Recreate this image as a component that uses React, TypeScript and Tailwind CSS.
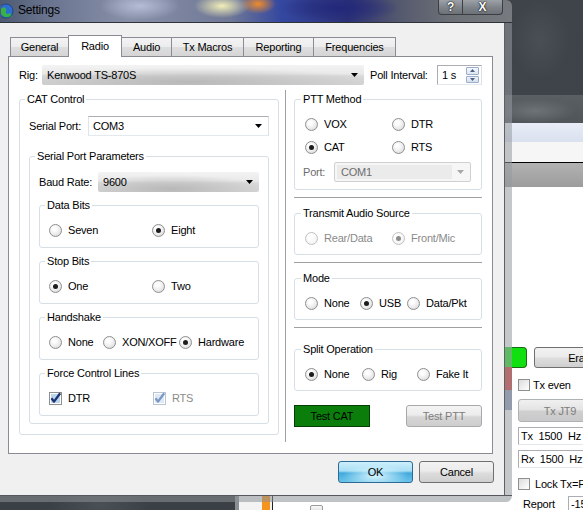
import React from "react";

type RP = { label: string; checked?: boolean; disabled?: boolean; w?: string };

function Radio({ label, checked, disabled, w = "" }: RP) {
  return (
    <div className={`flex items-center h-[14px] shrink-0 ${w}`}>
      <span
        className={`w-[13px] h-[13px] rounded-full border flex items-center justify-center shrink-0 ${
          disabled
            ? "border-[#c2c2c2] bg-[radial-gradient(circle_at_40%_35%,#ffffff_20%,#ededed_100%)]"
            : "border-[#8f8f8f] bg-[radial-gradient(circle_at_40%_35%,#ffffff_15%,#ececec_55%,#d0d0d0_100%)]"
        }`}
      >
        {checked ? (
          <span className={`w-[5px] h-[5px] rounded-full ${disabled ? "bg-[#8c8c8c]" : "bg-[#1c1c1c]"}`} />
        ) : null}
      </span>
      <span className={`ml-[6px] whitespace-nowrap ${disabled ? "text-[#8a8a8a]" : ""}`}>{label}</span>
    </div>
  );
}

function Check({ label, checked, disabled, w = "" }: RP) {
  return (
    <div className={`flex items-center h-[14px] shrink-0 ${w}`}>
      <svg width="13" height="13" viewBox="0 0 13 13" className="shrink-0 overflow-visible">
        <rect x="0.5" y="0.5" width="12" height="12" fill="#ffffff" stroke={disabled ? "#b7c5d4" : "#8e8f8f"} />
        <rect x="2" y="2" width="9" height="9" fill={checked ? (disabled ? "#dde9f4" : "#bcd6ee") : "#e9e9e9"} />
        {checked ? (
          <path
            d="M2.5 6.2 L5 9.6 L11.2 1.2"
            fill="none"
            stroke={disabled ? "#7b97c4" : "#1d3472"}
            strokeWidth="2.3"
            strokeLinejoin="round"
          />
        ) : null}
      </svg>
      <span className={`ml-[6px] whitespace-nowrap ${disabled ? "text-[#8a8a8a]" : ""}`}>{label}</span>
    </div>
  );
}

function Group({ title, className = "", children }: { title: string; className?: string; children?: React.ReactNode }) {
  return (
    <fieldset className={`border border-[#d5dfe5] rounded-[3px] ${className}`}>
      <legend className="ml-[-4px] px-[2px] leading-[14px]">{title}</legend>
      {children}
    </fieldset>
  );
}

function Arrow({ color = "#000" }: { color?: string }) {
  return (
    <svg width="7" height="4" viewBox="0 0 7 4" className="shrink-0">
      <path d="M0 0 H7 L3.5 4 Z" fill={color} />
    </svg>
  );
}

function GlossCombo({ text, w }: { text: string; w: string }) {
  return (
    <div
      className={`${w} h-[20px] shrink-0 flex items-center pl-[5px] pr-[6px] rounded-[2px] bg-[radial-gradient(ellipse_60%_70%_at_45%_85%,#b8b8b8_0%,rgba(200,200,200,0)_100%),linear-gradient(180deg,#f3f3f3_0%,#e9e9e9_45%,#dadada_55%,#d4d4d4_100%)]`}
    >
      <span className="flex-1">{text}</span>
      <Arrow />
    </div>
  );
}

function Pane() {
  return (
    <div className="w-[485px] h-[398px] bg-white border border-[#898c95] px-[10px] pt-[8px] relative z-0">
      {/* Rig row */}
      <div className="flex items-center h-[20px]">
        <span className="w-[23px] shrink-0">Rig:</span>
        <GlossCombo text="Kenwood TS-870S" w="w-[322px]" />
        <span className="ml-[6px] whitespace-nowrap">Poll Interval:</span>
        <div className="ml-auto w-[45px] h-[20px] border border-[#abadb3] border-r-[#dbdfe6] border-b-[#e3e9ef] flex items-center pl-[4px] pr-[2px]">
          <span className="flex-1">1 s</span>
          <div className="w-[13px] h-[16px] flex flex-col gap-[1px]">
            <div className="flex-1 border border-[#9aaecb] rounded-[1px] bg-[linear-gradient(#f5f8fc,#dce6f2)] flex items-center justify-center">
              <svg width="5" height="3" viewBox="0 0 5 3"><path d="M0 3 L2.5 0 L5 3 Z" fill="#4c5f86" /></svg>
            </div>
            <div className="flex-1 border border-[#9aaecb] rounded-[1px] bg-[linear-gradient(#eef3f9,#d4e0ee)] flex items-center justify-center">
              <svg width="5" height="3" viewBox="0 0 5 3"><path d="M0 0 L2.5 3 L5 0 Z" fill="#4c5f86" /></svg>
            </div>
          </div>
        </div>
      </div>

      {/* Columns */}
      <div className="mt-[5px] flex h-[352px]">
        {/* Left column */}
        <div className="w-[260px] shrink-0 pt-[2px]">
          <Group title="CAT Control" className="px-[9px] pt-[10px] pb-[10px]">
            <div className="flex items-center h-[20px]">
              <span className="w-[59px] shrink-0">Serial Port:</span>
              <div className="w-[181px] h-[20px] border border-[#abadb3] border-r-[#dbdfe6] border-b-[#e3e9ef] border-l-[#e2e3ea] flex items-center pl-[4px] pr-[6px] bg-white">
                <span className="flex-1">COM3</span>
                <Arrow />
              </div>
            </div>
            <Group title="Serial Port Parameters" className="mt-[13px] px-[9px] pt-[9px] pb-[7px]">
              <div className="flex items-center h-[20px]">
                <span className="w-[59px] shrink-0">Baud Rate:</span>
                <GlossCombo text="9600" w="w-[161px]" />
              </div>
              <Group title="Data Bits" className="mt-[6px] px-[9px] pt-[11px] pb-[10px]">
                <div className="flex">
                  <Radio label="Seven" w="w-[103px]" />
                  <Radio label="Eight" checked />
                </div>
              </Group>
              <Group title="Stop Bits" className="mt-[6px] px-[9px] pt-[11px] pb-[10px]">
                <div className="flex">
                  <Radio label="One" checked w="w-[103px]" />
                  <Radio label="Two" />
                </div>
              </Group>
              <Group title="Handshake" className="mt-[6px] px-[9px] pt-[11px] pb-[10px]">
                <div className="flex">
                  <Radio label="None" w="w-[54px]" />
                  <Radio label="XON/XOFF" w="w-[76px]" />
                  <Radio label="Hardware" checked />
                </div>
              </Group>
              <Group title="Force Control Lines" className="mt-[6px] px-[9px] pt-[11px] pb-[10px]">
                <div className="flex">
                  <Check label="DTR" checked w="w-[104px]" />
                  <Check label="RTS" checked disabled />
                </div>
              </Group>
            </Group>
          </Group>
        </div>

        {/* Vertical separator */}
        <div className="ml-[6px] w-px bg-[#a0a0a0] shrink-0" />

        {/* Right column */}
        <div className="ml-[8px] flex-1 pt-[2px] flex flex-col">
          <Group title="PTT Method" className="px-[10px] pt-[11px] pb-[7px]">
            <div className="flex">
              <Radio label="VOX" w="w-[87px]" />
              <Radio label="DTR" />
            </div>
            <div className="flex mt-[9px]">
              <Radio label="CAT" checked w="w-[87px]" />
              <Radio label="RTS" />
            </div>
            <div className="flex items-center h-[20px] mt-[8px] ml-[-2px]">
              <span className="w-[31px] shrink-0 text-[#6d6d6d]">Port:</span>
              <div className="w-[137px] h-[20px] border border-[#d0d0d0] rounded-[2px] bg-[#f6f6f6] flex items-stretch p-[2px]">
                <div className="flex-1 bg-[#ebebeb] flex items-center pl-[4px] text-[#6d6d6d]">COM1</div>
                <div className="w-[16px] flex items-center justify-center">
                  <Arrow color="#a8a8a8" />
                </div>
              </div>
            </div>
          </Group>
          <div className="mt-[7px] h-px bg-[#a0a0a0]" />
          <Group title="Transmit Audio Source" className="mt-[8px] px-[10px] pt-[11px] pb-[9px]">
            <div className="flex">
              <Radio label="Rear/Data" disabled w="w-[87px]" />
              <Radio label="Front/Mic" checked disabled />
            </div>
          </Group>
          <div className="mt-[7px] h-px bg-[#a0a0a0]" />
          <Group title="Mode" className="mt-[8px] px-[10px] pt-[11px] pb-[9px]">
            <div className="flex">
              <Radio label="None" w="w-[55px]" />
              <Radio label="USB" checked w="w-[47px]" />
              <Radio label="Data/Pkt" />
            </div>
          </Group>
          <div className="mt-[7px] h-px bg-[#a0a0a0]" />
          <Group title="Split Operation" className="mt-[14px] px-[10px] pt-[11px] pb-[9px]">
            <div className="flex">
              <Radio label="None" checked w="w-[57px]" />
              <Radio label="Rig" w="w-[55px]" />
              <Radio label="Fake It" />
            </div>
          </Group>
          <div className="mt-[14px] flex justify-between">
            <div className="w-[76px] h-[22px] bg-[#0b7d0b] border border-[#063f06] flex items-center justify-center">
              Test CAT
            </div>
            <div className="w-[76px] h-[22px] rounded-[3px] border border-[#a9a9a9] bg-[linear-gradient(180deg,#f4f4f4_0%,#ececec_45%,#d6d6d6_55%,#cdcdcd_100%)] flex items-center justify-center text-[#7d7d7d]">
              Test PTT
            </div>
          </div>
        </div>
      </div>
    </div>
  );
}

function Tabs() {
  const tab =
    "h-[19px] border-t border-r border-[#898c95] bg-[linear-gradient(180deg,#f3f3f3_0%,#ececec_50%,#dedede_50%,#d5d5d5_100%)] flex items-center justify-center whitespace-nowrap";
  return (
    <div className="ml-[2px] h-[21px] flex items-end relative z-10">
      <div className={`${tab} w-[59px] border-l`}>General</div>
      <div className="-ml-px -mb-px h-[22px] w-[54px] border-t border-x border-[#898c95] bg-white flex items-start justify-center pt-[3px]">
        Radio
      </div>
      <div className={`${tab} w-[50px]`}>Audio</div>
      <div className={`${tab} w-[72px]`}>Tx Macros</div>
      <div className={`${tab} w-[70px]`}>Reporting</div>
      <div className={`${tab} w-[82px]`}>Frequencies</div>
    </div>
  );
}

function TitleBar() {
  return (
    <div className="h-[23px] shrink-0 flex items-start border-b border-[#2f3236] rounded-tr-[6px] bg-[radial-gradient(ellipse_18px_10px_at_258px_4px,#f08a2a_0%,rgba(240,138,42,0)_100%),radial-gradient(ellipse_28px_12px_at_222px_6px,#f2eeb8_0%,rgba(242,238,184,0)_100%),radial-gradient(ellipse_60px_14px_at_340px_8px,#23287a_0%,rgba(35,40,122,0)_100%),radial-gradient(ellipse_40px_14px_at_140px_6px,#b4bdd6_0%,rgba(180,189,214,0)_100%),linear-gradient(90deg,#4e5a72_0%,#6b7590_10%,#8890a8_25%,#6f7896_45%,#3447a0_55%,#2c3175_68%,#55596e_78%,#6c7076_88%,#777b80_100%)]">
      <svg width="14" height="16" viewBox="0 0 14 16" className="mt-[3px] ml-[1px] shrink-0">
        <circle cx="5" cy="8" r="7" fill="#2d6fd0" />
        <path d="M0 6 C3 3 6 5 5 8 C4 11 7 12 9 10 L11 13 C7 16 1 14 0 10 Z" fill="#35b34a" />
        <circle cx="5" cy="8" r="7" fill="none" stroke="#1b3c80" strokeWidth="0.8" />
      </svg>
      <span className="ml-[3px] mt-[3px] text-[12px] leading-[15px] text-black">Settings</span>
      <div className="ml-auto mr-[9px] flex h-[15px]">
        <div className="w-[25px] h-[15px] border border-[#3b3e42] border-t-0 rounded-bl-[4px] bg-[linear-gradient(180deg,#9da2a8_0%,#80858b_50%,#6c7177_100%)] flex items-center justify-center text-white font-bold text-[12px] leading-none [text-shadow:0_0_2px_#000,0_0_1px_#000]">
          ?
        </div>
        <div className="w-[40px] h-[15px] border border-[#3b3e42] border-l-0 border-t-0 rounded-br-[4px] bg-[linear-gradient(180deg,#9da2a8_0%,#80858b_50%,#6c7177_100%)] flex items-center justify-center text-white font-bold text-[12px] leading-none [text-shadow:0_0_2px_#000,0_0_1px_#000]">
          X
        </div>
      </div>
    </div>
  );
}

function Dialog() {
  return (
    <div className="absolute left-0 top-0 w-[512px] h-[502px] flex flex-col rounded-br-[6px] overflow-hidden">
      <TitleBar />
      <div className="flex h-[472px] shrink-0">
        <div className="w-[505px] shrink-0 bg-[#f0f0f0] border-r border-[#5d6166] pl-[8px] pt-[12px] flex flex-col">
          <Tabs />
          <Pane />
          <div className="mt-[7px] w-[486px] flex justify-end gap-[6px]">
            <div className="w-[75px] h-[22px] rounded-[3px] border border-[#2e6a93] bg-[radial-gradient(ellipse_45%_60%_at_50%_70%,#d8f6ff_0%,rgba(160,225,248,0)_100%),linear-gradient(180deg,#cdeefb_0%,#a8def5_45%,#3fa9dc_55%,#6cc4ea_100%)] flex items-center justify-center">
              OK
            </div>
            <div className="w-[75px] h-[22px] rounded-[3px] border border-[#707070] bg-[linear-gradient(180deg,#f2f2f2_0%,#ebebeb_45%,#dddddd_55%,#cfcfcf_100%)] flex items-center justify-center">
              Cancel
            </div>
          </div>
        </div>
        <div className="w-[7px] shrink-0 bg-[rgba(150,155,160,0.55)]" />
      </div>
      <div className="h-[7px] shrink-0 border-t border-[#55595e] bg-[rgba(140,145,150,0.55)]" />
    </div>
  );
}

function AppWindow() {
  return (
    <div className="absolute left-[235px] top-[95px] w-[400px] h-[420px] flex flex-col">
      <div className="h-[28px] shrink-0 bg-[radial-gradient(ellipse_40px_12px_at_300px_16px,#6e7378_0%,rgba(110,115,120,0)_100%),linear-gradient(180deg,#5a5f64,#50555a)]" />
      <div className="h-[19px] shrink-0 bg-[linear-gradient(180deg,#e8edf6,#d9e0ef)]" />
      <div className="h-[20px] shrink-0 bg-[#f6f6f6]" />
      <div className="h-px shrink-0 bg-black" />
      <div className="h-[24px] shrink-0 bg-[linear-gradient(180deg,#b2b2b2,#9c9c9c)]" />
      <div className="flex-1 flex bg-white border-l-[4px] border-[#8a8f94]">
        <div className="w-[266px] shrink-0 flex flex-col justify-end bg-[#f3f3f3]">
          <div className="h-[25px] flex items-stretch">
            <div className="ml-[23px] w-[8px] bg-[#f7941d]" />
            <div className="ml-[2px] w-px bg-[#222]" />
            <div className="flex-1 bg-white flex items-end pl-[37px] pb-[2px]">
              <div className="w-[13px] h-[8px] rounded-[2px] border border-[#9a9a9a] bg-[linear-gradient(#fafafa,#dcdcdc)]" />
            </div>
          </div>
        </div>
        <div className="w-[7px] shrink-0 flex flex-col pt-[160px]">
          <div className="h-[20px] bg-[#22dd22]" />
          <div className="h-[23px] bg-[#d23a3a]" />
          <div className="h-[20px] bg-[#8c9bb8]" />
        </div>
        <div className="flex-1 flex flex-col pt-[160px]">
          <div className="flex items-start h-[21px]">
            <div className="w-[15px] h-[21px] bg-[#10e010] border border-[#1a6a1a] border-l-0 rounded-r-[4px]" />
            <div className="ml-[7px] w-[96px] h-[21px] rounded-[3px] border border-[#707070] bg-[linear-gradient(180deg,#f2f2f2_0%,#ebebeb_45%,#dddddd_55%,#cfcfcf_100%)] flex items-center justify-center">
              Erase
            </div>
          </div>
          <div className="mt-[10px] ml-[6px] flex items-center h-[13px]">
            <div className="w-[12px] h-[12px] border border-[#8e8f8f] bg-[linear-gradient(135deg,#dcdcdc,#ffffff)]" />
            <span className="ml-[3px] whitespace-nowrap">Tx even</span>
          </div>
          <div className="mt-[8px] ml-[6px] w-[84px] h-[23px] rounded-[3px] border border-[#adb2b5] bg-[linear-gradient(180deg,#f0f0f0_0%,#e4e4e4_45%,#cfcfcf_55%,#c9c9c9_100%)] flex items-center justify-center text-[#7d7d7d]">
            Tx JT9
          </div>
          <div className="mt-[5px] ml-[6px] w-[90px] h-[18px] border border-[#abadb3] border-r-[#dbdfe6] border-b-[#e3e9ef] bg-white flex items-center pl-[2px] whitespace-pre">
            Tx  1500  Hz
          </div>
          <div className="mt-[5px] ml-[6px] w-[90px] h-[18px] border border-[#abadb3] border-r-[#dbdfe6] border-b-[#e3e9ef] bg-white flex items-center pl-[2px] whitespace-pre">
            Rx  1500  Hz
          </div>
          <div className="mt-[9px] ml-[6px] flex items-center h-[13px]">
            <div className="w-[12px] h-[12px] border border-[#8e8f8f] bg-[linear-gradient(135deg,#dcdcdc,#ffffff)]" />
            <span className="ml-[5px] whitespace-nowrap">Lock Tx=Freq</span>
          </div>
          <div className="mt-[7px] flex items-center h-[14px]">
            <span className="ml-[11px] w-[45px] shrink-0">Report</span>
            <div className="w-[40px] h-[16px] border border-[#abadb3] bg-white pl-[2px]">-15</div>
          </div>
        </div>
      </div>
    </div>
  );
}

export default function App() {
  return (
    <div className="relative w-[583px] h-[510px] overflow-hidden bg-[radial-gradient(ellipse_30px_40px_at_540px_40px,#4a4f55_0%,rgba(74,79,85,0)_100%),radial-gradient(ellipse_50px_20px_at_100px_505px,#4b5056_0%,rgba(75,80,86,0)_100%),linear-gradient(#3f444a,#3b4046)] font-['Liberation_Sans',Arial,sans-serif] text-[11px] leading-[14px] tracking-[-0.2px] text-black">
      <AppWindow />
      <Dialog />
    </div>
  );
}
